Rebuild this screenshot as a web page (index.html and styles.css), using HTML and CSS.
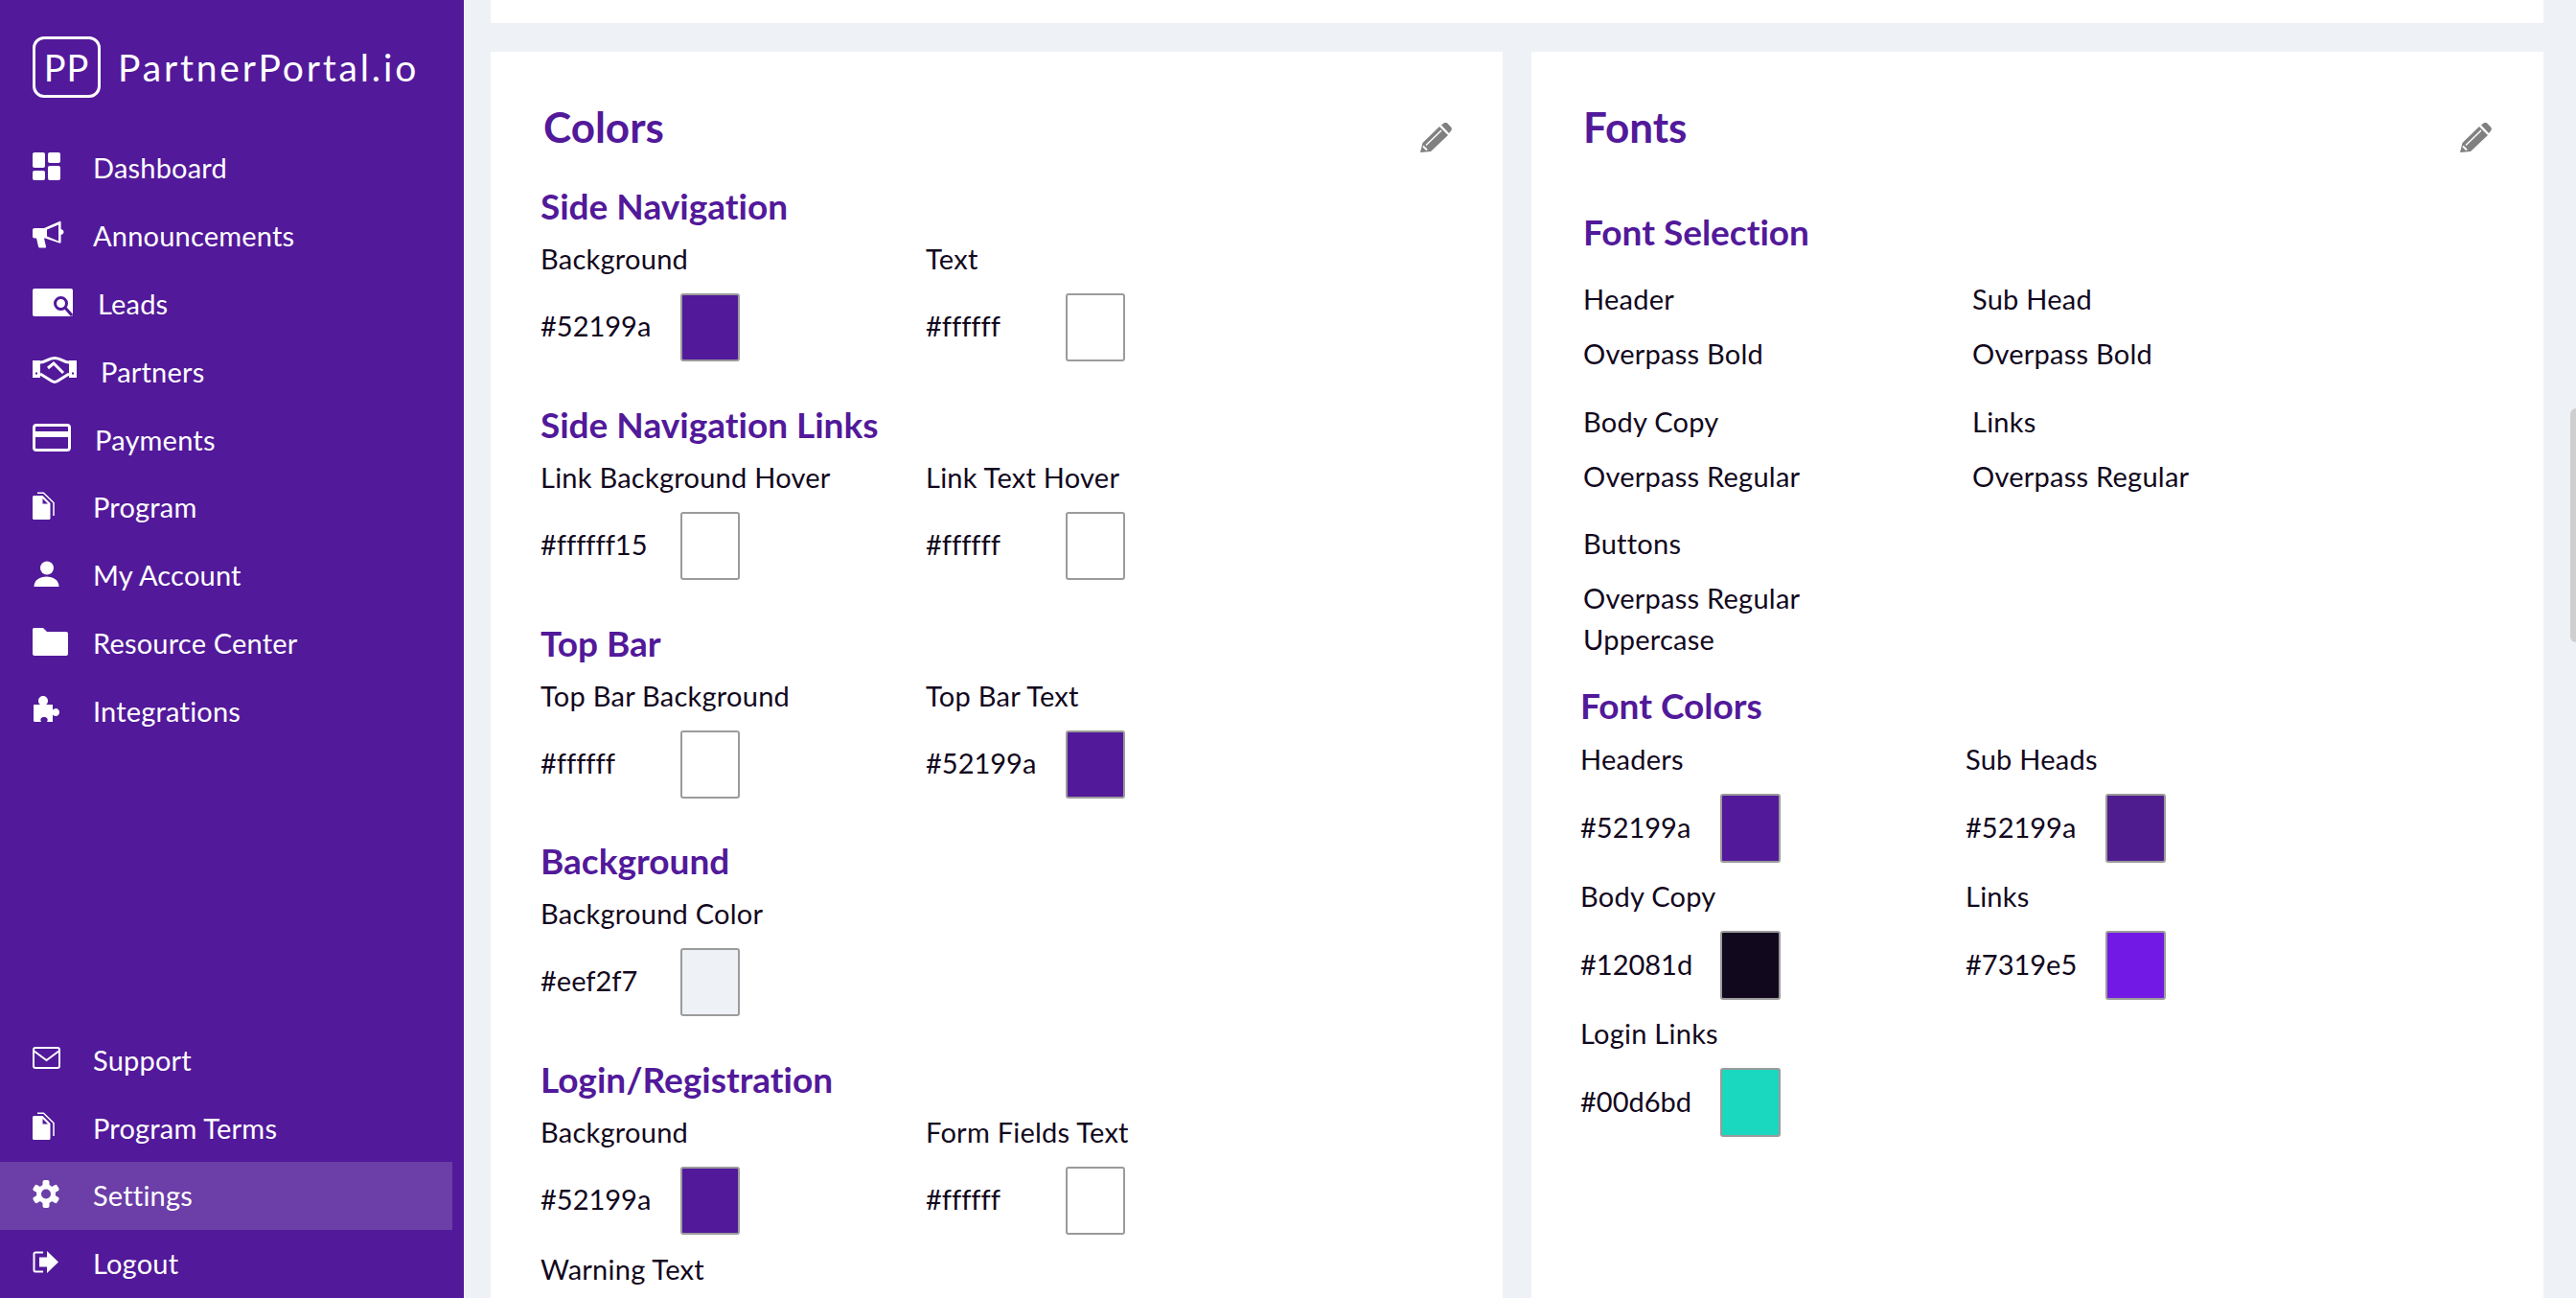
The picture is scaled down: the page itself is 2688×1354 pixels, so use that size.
FILE: index.html
```html
<!DOCTYPE html>
<html lang="en">
<head>
<meta charset="utf-8">
<title>PartnerPortal.io Settings</title>
<link rel="stylesheet" href="styles.css">
</head>
<body>
<div class="app">
  <aside class="sidebar">
    <div class="brand">
      <span class="brand-mark">PP</span>
      <span class="brand-name">PartnerPortal.io</span>
    </div>
    <nav class="nav">
      <a class="nav-item"><span class="slot"><svg width="29" height="29" viewBox="0 0 29 29" fill="#fff"><rect width="13" height="16" rx="2"/><rect x="16" width="13" height="11" rx="2"/><rect y="19" width="13" height="10" rx="2"/><rect x="16" y="14" width="13" height="15" rx="2"/></svg></span><span>Dashboard</span></a>
      <a class="nav-item"><span class="slot"><svg width="33" height="29" viewBox="0 0 33 29" fill="#fff" fill-rule="evenodd"><path d="M2 8h10L28 1c.9-.4 1.6 0 1.6 1v7c1.6.3 2.9 1.5 2.9 3s-1.300 2.700-2.900 3v7.500c0 1-.7 1.400-1.600 1L13 18.500h-1l2 8.800c.1.800-.3 1.300-1 1.300H7.500c-.7 0-1.200-.3-1.400-1L4 18.500H2c-1.200 0-2-.8-2-2V10c0-1.200.8-2 2-2zM15 9.500v7l12 5V4.500z"/></svg></span><span>Announcements</span></a>
      <a class="nav-item"><span class="slot slot-leads"><svg width="42" height="29" viewBox="0 0 42 29"><rect width="42" height="29" rx="2" fill="#fff"/><path d="M34 20l7 8" stroke="#52199a" stroke-width="3"/><circle cx="29.500" cy="15.500" r="6" fill="#fff" stroke="#52199a" stroke-width="3"/></svg></span><span>Leads</span></a>
      <a class="nav-item"><span class="slot slot-partners"><svg width="46" height="28" viewBox="0 0 46 28"><path d="M0 4h8v18H0zM38 4h8v18h-8z" fill="#fff"/><path d="M3 17.500h2M41 17.500h2" stroke="#52199a" stroke-width="2"/><path d="M8 6c6 0 8-4.500 15-4.500S32 6 38 6M8 18l12 7.500c2 1.200 4 1.200 6 0L38 18M16 12l6-5 10 10" fill="none" stroke="#fff" stroke-width="3"/></svg></span><span>Partners</span></a>
      <a class="nav-item"><span class="slot slot-payments"><svg width="40" height="29" viewBox="0 0 40 29"><rect x="1.500" y="1.500" width="37" height="26" rx="2.500" fill="none" stroke="#fff" stroke-width="3"/><rect x="2" y="8" width="36" height="6" fill="#fff"/></svg></span><span>Payments</span></a>
      <a class="nav-item"><span class="slot"><svg width="23" height="29" viewBox="0 0 23 29"><path d="M1.500 4h9l8 8v15.500a1.500 1.500 0 0 1-1.500 1.500H1.500A1.500 1.500 0 0 1 0 27.500v-22A1.500 1.500 0 0 1 1.500 4z" fill="#fff"/><path d="M10.500 7v5.500h5.500z" fill="#52199a"/><path d="M5 1.200h6.500L22 11.500V25" fill="none" stroke="#fff" stroke-width="1.500"/></svg></span><span>Program</span></a>
      <a class="nav-item"><span class="slot"><svg class="nudge" width="27" height="27" viewBox="0 0 27 27" fill="#fff"><circle cx="14" cy="7.500" r="7"/><path d="M.5 27c0-7 6-10.500 13-10.500S26.500 20 26.500 27z"/></svg></span><span>My Account</span></a>
      <a class="nav-item"><span class="slot"><svg width="37" height="29" viewBox="0 0 37 29" fill="#fff"><path d="M1.500 0h9.500l4 4h20a2 2 0 0 1 2 2v21a2 2 0 0 1-2 2H2a2 2 0 0 1-2-2V1.500A1.500 1.500 0 0 1 1.500 0z"/></svg></span><span>Resource Center</span></a>
      <a class="nav-item"><span class="slot"><svg class="nudge" width="27" height="27" viewBox="0 0 27 27" fill="#fff"><path d="M0 9h7C5.500 8 5 6.500 5 5c0-3 2.500-5 5-5s5 2 5 5c0 1.500-.5 3-2 4h7v5.500c1-1 2-1.500 3-1.500 2.500 0 4 2 4 4s-1.500 4-4 4c-1 0-2-.5-3-1.500V27h-6c.5-1 1-2 .5-3-.5-1.500-2-2-3.500-2s-3 .5-3.500 2c-.5 1 0 2 .5 3H1.500A1.500 1.500 0 0 1 0 25.500z"/></svg></span><span>Integrations</span></a>
    </nav>
    <nav class="nav nav-bottom">
      <a class="nav-item"><span class="slot"><svg width="29" height="23" viewBox="0 0 29 23" fill="none" stroke="#fff" stroke-width="2"><rect x="1" y="1" width="27" height="21" rx="2"/><path d="M1 4l13.500 10L28 4"/></svg></span><span>Support</span></a>
      <a class="nav-item"><span class="slot"><svg width="23" height="29" viewBox="0 0 23 29"><path d="M1.500 4h9l8 8v15.500a1.500 1.500 0 0 1-1.500 1.500H1.500A1.500 1.500 0 0 1 0 27.500v-22A1.500 1.500 0 0 1 1.500 4z" fill="#fff"/><path d="M10.500 7v5.500h5.500z" fill="#52199a"/><path d="M5 1.200h6.500L22 11.500V25" fill="none" stroke="#fff" stroke-width="1.500"/></svg></span><span>Program Terms</span></a>
      <a class="nav-item is-active"><span class="slot"><svg width="28" height="29" viewBox="0 0 28 29" fill="#fff"><rect x="10.500" width="7" height="29" rx="2"/><rect x="10.500" width="7" height="29" rx="2" transform="rotate(60 14 14.500)"/><rect x="10.500" width="7" height="29" rx="2" transform="rotate(120 14 14.500)"/><circle cx="14" cy="14.500" r="10"/><circle cx="14" cy="14.500" r="5" fill="#6c3ea7"/></svg></span><span>Settings</span></a>
      <a class="nav-item"><span class="slot"><svg width="27" height="23" viewBox="0 0 27 23"><path d="M11 1.500H3A1.500 1.500 0 0 0 1.500 3v17A1.500 1.500 0 0 0 3 21.500h8" fill="none" stroke="#fff" stroke-width="2"/><path d="M15 0l12 11.500L15 23v-6.500H7v-10h8z" fill="#fff"/></svg></span><span>Logout</span></a>
    </nav>
  </aside>

  <main class="main">
    <div class="top-card"></div>
    <div class="columns">
      <section class="card card-colors">
        <header class="card-head">
          <h1 class="card-title">Colors</h1>
          <svg class="pencil" width="33" height="31" viewBox="0 0 33 31" fill="#808080"><path d="M2.500 21L20 4l9 9-18 17-11 1zM22 2.500l2.500-2c1.500-1 3-.7 4 .3L32 4.500c1.300 1.500 1.200 3-.3 4.500l-1.700 2z"/><path d="M6 23.500L22 8" stroke="#fff" stroke-width="1.500"/><path d="M3 24.500l4 4" stroke="#fff" stroke-width="2"/></svg>
        </header>

        <div class="group">
          <h2 class="sub">Side Navigation</h2>
          <div class="pairs">
            <div class="field"><div class="label">Background</div><div class="value"><span class="hex">#52199a</span><span class="swatch c-purple"></span></div></div>
            <div class="field"><div class="label">Text</div><div class="value"><span class="hex">#ffffff</span><span class="swatch c-white"></span></div></div>
          </div>
        </div>
        <div class="group">
          <h2 class="sub">Side Navigation Links</h2>
          <div class="pairs">
            <div class="field"><div class="label">Link Background Hover</div><div class="value"><span class="hex">#ffffff15</span><span class="swatch c-white"></span></div></div>
            <div class="field"><div class="label">Link Text Hover</div><div class="value"><span class="hex">#ffffff</span><span class="swatch c-white"></span></div></div>
          </div>
        </div>
        <div class="group">
          <h2 class="sub">Top Bar</h2>
          <div class="pairs">
            <div class="field"><div class="label">Top Bar Background</div><div class="value"><span class="hex">#ffffff</span><span class="swatch c-white"></span></div></div>
            <div class="field"><div class="label">Top Bar Text</div><div class="value"><span class="hex">#52199a</span><span class="swatch c-purple"></span></div></div>
          </div>
        </div>
        <div class="group">
          <h2 class="sub">Background</h2>
          <div class="pairs">
            <div class="field"><div class="label">Background Color</div><div class="value"><span class="hex">#eef2f7</span><span class="swatch c-page"></span></div></div>
          </div>
        </div>
        <div class="group">
          <h2 class="sub">Login/Registration</h2>
          <div class="pairs">
            <div class="field"><div class="label">Background</div><div class="value"><span class="hex">#52199a</span><span class="swatch c-purple"></span></div></div>
            <div class="field"><div class="label">Form Fields Text</div><div class="value"><span class="hex">#ffffff</span><span class="swatch c-white"></span></div></div>
            <div class="field"><div class="label">Warning Text</div></div>
          </div>
        </div>
      </section>

      <section class="card card-fonts">
        <header class="card-head">
          <h1 class="card-title title-fonts">Fonts</h1>
          <svg class="pencil" width="33" height="31" viewBox="0 0 33 31" fill="#808080"><path d="M2.500 21L20 4l9 9-18 17-11 1zM22 2.500l2.500-2c1.500-1 3-.7 4 .3L32 4.500c1.300 1.500 1.200 3-.3 4.500l-1.700 2z"/><path d="M6 23.500L22 8" stroke="#fff" stroke-width="1.500"/><path d="M3 24.500l4 4" stroke="#fff" stroke-width="2"/></svg>
        </header>
        <h2 class="sub sub-selection">Font Selection</h2>
        <div class="font-grid">
          <div class="font-cell"><div class="label font-label">Header</div><div class="font-value">Overpass Bold</div></div>
          <div class="font-cell"><div class="label font-label">Sub Head</div><div class="font-value">Overpass Bold</div></div>
          <div class="font-cell"><div class="label font-label">Body Copy</div><div class="font-value">Overpass Regular</div></div>
          <div class="font-cell"><div class="label font-label">Links</div><div class="font-value">Overpass Regular</div></div>
          <div class="font-cell"><div class="label font-label">Buttons</div><div class="font-value">Overpass Regular<br>Uppercase</div></div>
        </div>
        <h2 class="sub sub-colors">Font Colors</h2>
        <div class="pairs">
          <div class="field"><div class="label">Headers</div><div class="value"><span class="hex">#52199a</span><span class="swatch swatch-tall c-purple"></span></div></div>
          <div class="field"><div class="label">Sub Heads</div><div class="value"><span class="hex">#52199a</span><span class="swatch swatch-tall c-deep"></span></div></div>
          <div class="field"><div class="label">Body Copy</div><div class="value"><span class="hex">#12081d</span><span class="swatch swatch-tall c-ink"></span></div></div>
          <div class="field"><div class="label">Links</div><div class="value"><span class="hex">#7319e5</span><span class="swatch swatch-tall c-link"></span></div></div>
          <div class="field"><div class="label">Login Links</div><div class="value"><span class="hex">#00d6bd</span><span class="swatch swatch-tall c-teal"></span></div></div>
        </div>
      </section>
    </div>
  </main>
  <div class="scroll-thumb"></div>
</div>
</body>
</html>
```

FILE: styles.css
```css
* { box-sizing: border-box; }
html, body { margin: 0; height: 100%; overflow: hidden; }
body { font-family: "Lato", "Noto Sans", sans-serif; font-variant-ligatures: none; color: #12081d; background: #eef2f7; }
h1, h2 { margin: 0; }

.app { position: relative; display: flex; height: 1354px; overflow: hidden; }

.sidebar { flex: 0 0 484px; height: 100%; background: #52199a; color: #fff; display: flex; flex-direction: column; }
.brand { height: 140.6px; padding: 38px 0 0 34px; display: flex; align-items: flex-start; gap: 18px; flex: none; }
.brand-mark { width: 71px; height: 64px; border: 3px solid #fff; border-radius: 12px; display: flex; align-items: center; justify-content: center; font-size: 38px; letter-spacing: 1px; line-height: 1; }
.brand-name { font-size: 39px; line-height: 64px; letter-spacing: 2.85px; }

.nav { display: flex; flex-direction: column; }
.nav-bottom { margin-top: auto; }
.nav-item { height: 70.8px; width: 472px; padding: 0 0 2px 34px; display: flex; align-items: center; font-size: 29px; letter-spacing: 0.2px; color: #fff; }
.is-active { background: #6c3ea7; }
.slot { flex: none; width: 63px; display: flex; align-items: center; height: 100%; padding-bottom: 3px; }
.slot-leads { width: 68px; }
.slot-partners { width: 71px; }
.slot-payments { width: 65px; }
.nudge { margin-left: 1px; }

.main { flex: 1; min-width: 0; padding: 0 34px 0 28px; overflow: hidden; }
.top-card { height: 24px; background: #fff; margin-bottom: 30px; }
.columns { display: grid; grid-template-columns: 1fr 1fr; gap: 30px; }
.card { background: #fff; padding: 0 53px 0 52px; min-height: 1400px; }
.card-fonts { padding: 0 54px 0 51px; }
.card-head { height: 142px; padding: 53px 0 0 3px; display: flex; justify-content: space-between; align-items: flex-start; }
.card-title { font-size: 44px; line-height: 50px; font-weight: 700; color: #52199a; }
.pencil { margin-top: 21px; flex: none; }

.group { margin-bottom: 28.8px; }
.sub { font-size: 37px; line-height: 38px; font-weight: 700; color: #52199a; margin-bottom: 18px; }
.sub-selection { margin: 27px 0 33px 3px; }
.sub-colors { margin: 28.5px 0 19.5px; }
.pairs { display: grid; grid-template-columns: 402px 1fr; }
.field { margin-bottom: 18px; }
.card-fonts .field { margin-bottom: 17px; }
.label, .font-value { font-size: 29px; letter-spacing: 0.25px; }
.label { line-height: 36px; margin-bottom: 18px; }
.value { display: flex; align-items: center; }
.hex { width: 146px; flex: none; font-size: 29px; line-height: 36px; padding-bottom: 3px; box-sizing: content-box; }
.swatch { display: block; width: 62px; height: 71px; border: 2px solid #9b9b9b; border-radius: 3px; }
.swatch-tall { width: 63px; height: 72px; }
.c-purple { background: #52199a; }
.c-white { background: #fff; }
.c-page { background: #eef2f7; }
.c-deep { background: #4f1c90; }
.c-ink { background: #12081d; }
.c-link { background: #7319e5; }
.c-teal { background: #19d8bf; }

.font-grid { display: grid; grid-template-columns: 406px 1fr; padding-left: 3px; }
.font-cell { margin-bottom: 31px; }
.font-cell:last-child { margin-bottom: 0; }
.font-value { line-height: 42.5px; }

.scroll-thumb { position: absolute; right: 0; top: 426px; width: 6px; height: 244px; background: #cfcfcf; border-radius: 6px 0 0 6px; }
```
